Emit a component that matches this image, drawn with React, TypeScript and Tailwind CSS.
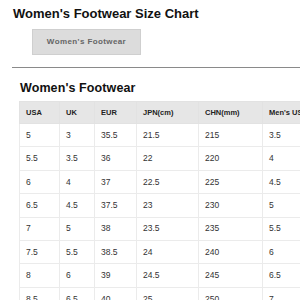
const rows = [
  ["5", "3", "35.5", "21.5", "215", "3.5"],
  ["5.5", "3.5", "36", "22", "220", "4"],
  ["6", "4", "37", "22.5", "225", "4.5"],
  ["6.5", "4.5", "37.5", "23", "230", "5"],
  ["7", "5", "38", "23.5", "235", "5.5"],
  ["7.5", "5.5", "38.5", "24", "240", "6"],
  ["8", "6", "39", "24.5", "245", "6.5"],
  ["8.5", "6.5", "40", "25", "250", "7"],
]

const heads = ["USA", "UK", "EUR", "JPN(cm)", "CHN(mm)", "Men's US"]
const widths = ["w-[40px]", "w-[35px]", "w-[42px]", "w-[62px]", "w-[64px]", "w-[80px]"]

export default function App() {
  return (
    <div className="w-[300px] h-[300px] overflow-hidden bg-white font-['Liberation_Sans',Arial,sans-serif]">
      <div className="pl-[13px] pt-[6px]">
        <h1 className="text-[13px] leading-[16px] font-bold text-[#111] whitespace-nowrap">
          Women's Footwear Size Chart
        </h1>
        <div className="pl-[19px] pt-[5px]">
          <button className="w-[109px] h-[26px] bg-[#dcdcdc] border border-[#cfcfcf] text-[8px] font-bold text-[#666] tracking-[0.4px]">
            Women's Footwear
          </button>
        </div>
      </div>
      <div className="ml-[12px] mt-[12px] border-t border-[#8a8a8a]" />
      <div className="pl-[19px]">
        <h2 className="pl-[1px] pt-[12px] pb-[5px] text-[12.5px] leading-[16px] font-bold text-[#111] tracking-[0.1px] whitespace-nowrap">
          Women's Footwear
        </h2>
        <table className="border-collapse table-fixed w-[323px] text-left">
          <thead>
            <tr className="h-[22px] bg-[#e6e6e6]">
              {heads.map((h, i) => (
                <th key={h} className={`${widths[i]} border border-[#e2e2e2] pl-[6px] text-[7.5px] font-bold text-[#222] whitespace-nowrap`}>
                  {h}
                </th>
              ))}
            </tr>
          </thead>
          <tbody>
            {rows.map((r) => (
              <tr key={r[0]} className="h-[23.4px]">
                {r.map((c, i) => (
                  <td key={i} className="border border-[#ebebeb] pl-[6px] text-[8.5px] text-[#333]">
                    {c}
                  </td>
                ))}
              </tr>
            ))}
          </tbody>
        </table>
      </div>
    </div>
  )
}
